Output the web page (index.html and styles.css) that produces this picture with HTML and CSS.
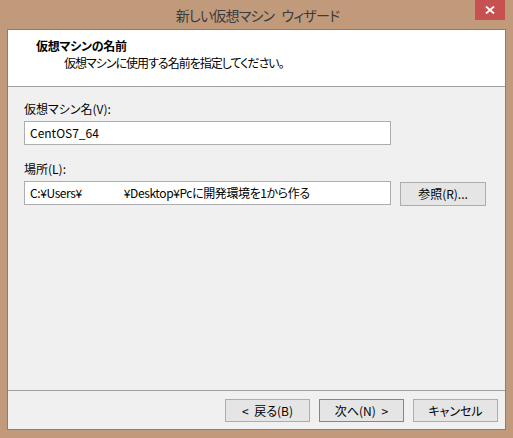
FILE: index.html
```html
<!DOCTYPE html>
<html lang="ja">
<head>
<meta charset="utf-8">
<title>新しい仮想マシン ウィザード</title>
<link rel="stylesheet" href="styles.css">
</head>
<body>
<div class="window">
  <div class="titlebar">
    <div class="title">新しい仮想マシン ウィザード</div>
    <div class="close">
      <svg width="10" height="8" viewBox="0 0 10 8"><path d="M1 0.5 L9 7.5 M9 0.5 L1 7.5" stroke="#fff" stroke-width="1.8" fill="none"/></svg>
    </div>
  </div>
  <div class="client">
    <div class="header">
      <div class="h-title">仮想マシンの名前</div>
      <div class="h-sub">仮想マシンに使用する名前を指定してください。</div>
    </div>
    <div class="body">
      <div class="label">仮想マシン名(V):</div>
      <div class="row">
        <div class="input">CentOS7_64</div>
      </div>
      <div class="label second">場所(L):</div>
      <div class="row">
        <div class="input path">C:¥Users¥<span class="mask"></span>¥Desktop¥Pcに開発環境を1から作る</div>
        <div class="btn browse">参照(R)...</div>
      </div>
    </div>
    <div class="footer">
      <div class="btn">&lt; 戻る(B)</div>
      <div class="btn default">次へ(N) &gt;</div>
      <div class="btn">キャンセル</div>
    </div>
  </div>
</div>
</body>
</html>
```
FILE: styles.css
```css
* { box-sizing: border-box; }
html, body { margin: 0; padding: 0; }
body {
  background: #c19a7c;
  font-family: "Noto Sans CJK JP", "Noto Sans", sans-serif;
  font-feature-settings: "palt";
  font-size: 12px;
  color: #000;
}
.window {
  width: 513px;
  height: 438px;
  background: #c19a7c;
  display: flex;
  flex-direction: column;
}
.titlebar {
  position: relative;
  height: 29px;
  flex: none;
}
.title {
  text-align: center;
  font-size: 14px;
  letter-spacing: -0.8px;
  word-spacing: 5px;
  line-height: 30px;
  color: #3b3b3b;
  padding-left: 2px;
}
.close {
  position: absolute;
  top: 0;
  right: 8px;
  width: 30px;
  height: 20px;
  background: #c75050;
  display: flex;
  align-items: center;
  justify-content: center;
}
.client {
  margin: 0 7px 0 7px;
  width: 499px;
  height: 401px;
  border: 1px solid #9c7a60;
  background: #f0f0f0;
  display: flex;
  flex-direction: column;
}
.header {
  height: 57px;
  flex: none;
  background: #fff;
  border-bottom: 1px solid #a0a0a0;
  padding: 8px 0 0 28px;
}
.h-title {
  font-weight: bold;
  line-height: 16px;
  letter-spacing: -0.3px;
}
.h-sub {
  line-height: 16px;
  margin-top: 1px;
  padding-left: 28px;
  letter-spacing: -1px;
}
.body {
  flex: 1;
  padding: 14px 0 0 16px;
}
.label {
  line-height: 16px;
  margin-bottom: 4px;
}
.label.second { margin-top: 16px; }
.row {
  display: flex;
  gap: 9px;
}
.input {
  width: 367px;
  height: 24px;
  border: 1px solid #abadb3;
  background: #fff;
  line-height: 22px;
  padding-left: 5px;
  white-space: nowrap;
  overflow: hidden;
}
.input.path { letter-spacing: -0.4px; }
.mask {
  display: inline-block;
  width: 42px;
}
.btn {
  width: 85px;
  height: 23px;
  border: 1px solid #adadad;
  background: #e5e5e5;
  text-align: center;
  line-height: 21px;
  word-spacing: 3px;
}
.browse { width: 86px; height: 24px; line-height: 22px; margin-top: 1px; }
.btn.default { border-color: #3399ff; }
.footer {
  height: 39px;
  flex: none;
  border-top: 1px solid #a0a0a0;
  display: flex;
  justify-content: flex-end;
  gap: 9px;
  padding: 8px 7px 0 0;
}
```
